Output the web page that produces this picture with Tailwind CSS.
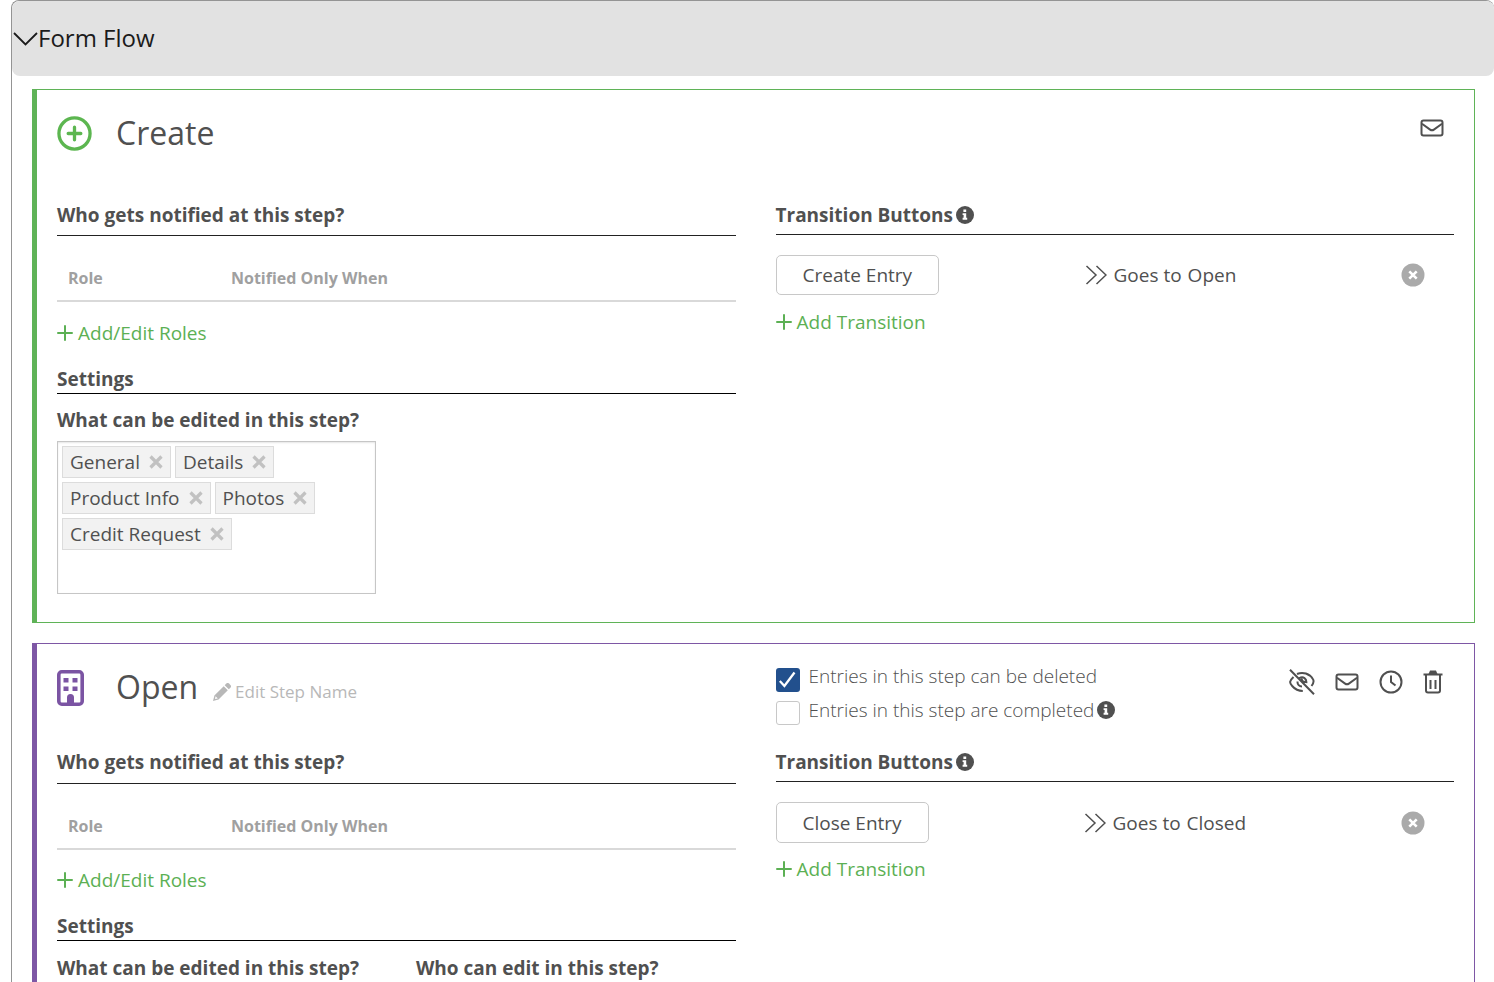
<!DOCTYPE html>
<html lang="en">
<head>
<meta charset="utf-8">
<meta name="viewport" content="width=device-width, initial-scale=1">
<title>Form Flow</title>
<script src="https://cdn.jsdelivr.net/npm/@tailwindcss/browser@4"></script>
</head>
<body class="bg-white font-['Open_Sans',sans-serif] text-[19px] leading-7 text-[#505050]">
<svg class="hidden" aria-hidden="true">
  <symbol id="info" viewBox="0 0 18 18"><circle cx="9" cy="9" r="9" fill="currentColor"/><path d="M7.4 3.4h2.800v2.500H7.4zM6.6 7.200h3.600v4.600h1v1.900H6.6v-1.900h1V9.1h-1z" fill="#fff"/></symbol>
  <symbol id="plus" viewBox="0 0 16 16"><path d="M8 1v14M1 8h14" fill="none" stroke="currentColor" stroke-width="2" stroke-linecap="round"/></symbol>
  <symbol id="mail" viewBox="0 0 24 18"><rect x="1.500" y="1.500" width="21" height="15" rx="2" fill="none" stroke="currentColor" stroke-width="2"/><path d="M2 4.800l8.100 5.800q1.900 1.300 3.800 0L22 4.800" fill="none" stroke="currentColor" stroke-width="2"/></symbol>
  <symbol id="goes" viewBox="0 0 22 20"><path d="M1.500 1L11 10l-9.500 9M11.500 1L21 10l-9.500 9" fill="none" stroke="currentColor" stroke-width="1.500"/></symbol>
  <symbol id="remove" viewBox="0 0 24 24"><circle cx="12" cy="12" r="11.500" fill="#aaa"/><path d="M8.300 8.300l7.400 7.400M15.700 8.300l-7.400 7.400" stroke="#fff" stroke-width="2.600"/></symbol>
  <symbol id="cross" viewBox="0 0 14 14"><path d="M1.500 1.500l11 11M12.500 1.500l-11 11" stroke="#c1c1c1" stroke-width="3.200"/></symbol>
</svg>
<div class="flex h-screen flex-col overflow-hidden pl-[11px]">
<section class="flex grow flex-col rounded-t-lg border-t border-l border-[#949494]">
  <button type="button" class="flex h-[75px] w-full shrink-0 items-center rounded-lg bg-[#e2e2e2] pb-[2px] text-2xl text-[#1b1b1b]">
    <svg class="h-4 w-[26px]" viewBox="0 0 26 16"><path d="M2 3l11.500 11.500L25 3" fill="none" stroke="currentColor" stroke-width="1.800"/></svg>
    Form Flow
  </button>

  <article class="mt-[13px] mr-[19px] ml-5 border border-l-[5px] border-[#5fb357] px-5 pb-7">
    <header class="flex h-[111px] pt-[22px]">
      <svg class="mt-1 size-[35px]" viewBox="0 0 36 36" fill="none" stroke="#5cb650"><circle cx="18" cy="18" r="16" stroke-width="3.400"/><path d="M18 11.500v13M11.500 18h13" stroke-width="3.400" stroke-linecap="round"/></svg>
      <h2 class="ml-6 text-[32px] leading-[42px]">Create</h2>
      <button type="button" aria-label="Notifications" class="mt-[7px] mr-[10px] ml-auto h-[18px] w-6"><svg class="h-[18px] w-6"><use href="#mail"/></svg></button>
    </header>
    <div class="grid grid-cols-2 gap-10">
      <div>
        <h3 class="border-b border-[#222] pb-[6px] font-bold">Who gets notified at this step?</h3>
        <table class="mt-[20px] w-full border-b-2 border-[#d9d9d9] text-left text-base text-[#a0a0a0]">
          <tr><th scope="col" class="h-[45px] w-[174px] pl-[11px]">Role</th><th scope="col">Notified Only When</th></tr>
        </table>
        <a href="#" class="mt-[17px] flex items-center gap-[5px] text-[#5cb054]"><svg class="size-4"><use href="#plus"/></svg>Add/Edit Roles</a>
        <h3 class="mt-[18px] border-b border-black font-bold">Settings</h3>
        <h4 class="mt-3 font-bold">What can be edited in this step?</h4>
        <ul class="mt-[7px] flex h-[153px] w-[319px] flex-wrap content-start gap-1 border border-[#c6c6c6] p-1 shadow-[inset_0_1px_2px_rgba(0,0,0,0.1)]">
          <li class="flex h-8 items-center gap-[9px] border border-[#dcdcdc] bg-[#f2f2f2] px-[7px]">General<button type="button" aria-label="Remove General"><svg class="size-[14px]"><use href="#cross"/></svg></button></li>
          <li class="flex h-8 items-center gap-[9px] border border-[#dcdcdc] bg-[#f2f2f2] px-[7px]">Details<button type="button" aria-label="Remove Details"><svg class="size-[14px]"><use href="#cross"/></svg></button></li>
          <li class="flex h-8 items-center gap-[9px] border border-[#dcdcdc] bg-[#f2f2f2] px-[7px]">Product Info<button type="button" aria-label="Remove Product Info"><svg class="size-[14px]"><use href="#cross"/></svg></button></li>
          <li class="flex h-8 items-center gap-[9px] border border-[#dcdcdc] bg-[#f2f2f2] px-[7px]">Photos<button type="button" aria-label="Remove Photos"><svg class="size-[14px]"><use href="#cross"/></svg></button></li>
          <li class="flex h-8 items-center gap-[9px] border border-[#dcdcdc] bg-[#f2f2f2] px-[7px]">Credit Request<button type="button" aria-label="Remove Credit Request"><svg class="size-[14px]"><use href="#cross"/></svg></button></li>
        </ul>
      </div>
      <div>
        <h3 class="flex items-center gap-[3px] border-b border-[#222] pb-[5px] font-bold">Transition Buttons<svg class="size-[18px]"><use href="#info"/></svg></h3>
        <div class="mt-5 flex items-center">
          <div class="w-[309px]"><button type="button" class="h-10 rounded-[5px] border border-[#c8c8c8] px-[26px]">Create Entry</button></div>
          <svg class="mr-[7px] h-5 w-[22px]"><use href="#goes"/></svg>
          <span>Goes to</span><span class="ml-[6px]">Open</span>
          <button type="button" aria-label="Remove transition" class="mr-[29px] ml-auto size-6"><svg class="size-6"><use href="#remove"/></svg></button>
        </div>
        <a href="#" class="mt-[13px] flex items-center gap-[5px] text-[#5cb054]"><svg class="size-4"><use href="#plus"/></svg>Add Transition</a>
      </div>
    </div>
  </article>

  <article class="mt-5 mr-[19px] ml-5 grow border border-b-0 border-l-[5px] border-[#7e57a5] px-5">
    <header class="grid h-[104px] grid-cols-2 gap-10 pt-[22px]">
      <div class="flex">
        <svg class="mt-1 h-9 w-[27px]" viewBox="0 0 27 36"><rect x="1.800" y="1.800" width="23.400" height="32.400" rx="3" fill="none" stroke="#7b54a3" stroke-width="3.600"/><path d="M6.500 8h5v4.600h-5zM15.500 8h5v4.600h-5zM6.500 16.500h5v4.600h-5zM15.500 16.500h5v4.600h-5zM10 34v-6.500a3.500 3.500 0 0 1 7 0V34z" fill="#7b54a3"/></svg>
        <h2 class="ml-8 text-[32px] leading-[42px]">Open</h2>
        <button type="button" class="mt-3 ml-[15px] flex h-7 items-center gap-1 text-[17px] text-[#b8b8b8]"><svg class="size-[18px]" viewBox="0 0 18 18" fill="currentColor"><path d="M10.700 3.200l4.100 4.100-9.300 9.300L0 18l1.400-5.500zM11.700 2.200L13.300.6a2 2 0 0 1 2.800 0l1.300 1.300a2 2 0 0 1 0 2.800l-1.600 1.600z"/><path d="M2.600 13.200l2.200 2.200-2.800.7z" fill="#fff"/></svg>Edit Step Name</button>
      </div>
      <div class="flex justify-between">
        <div class="-mt-1 flex flex-col gap-[6px] font-light">
          <label class="flex h-7 gap-[9px]"><input type="checkbox" checked class="peer sr-only"><span class="mt-[6px] flex size-6 shrink-0 items-center justify-center rounded-[3px] bg-[#22508d]"><svg class="size-[18px]" viewBox="0 0 18 18"><path d="M.8 10l4.600 5L15.500 1.500" fill="none" stroke="#fff" stroke-width="2.300"/></svg></span>Entries in this step can be deleted</label>
          <div class="flex h-7 items-center gap-[3px]"><label class="flex h-7 gap-[9px]"><input type="checkbox" class="mt-[5px] size-6 shrink-0 appearance-none rounded-[3px] border border-[#c8c8c8] bg-white">Entries in this step are completed</label><svg class="size-[18px]"><use href="#info"/></svg></div>
        </div>
        <div class="mt-[3px] mr-[11px] flex h-[26px] items-center">
          <button type="button" aria-label="Hide step" class="mr-5 h-[26px] w-[26px]"><svg class="size-[26px]" viewBox="0 0 26 26" fill="none" stroke="currentColor" stroke-width="2"><path d="M4.500 8C.2 12 .2 13.800 3.200 17c2.700 3.200 6.300 5 10.600 5M8 5c6-2.600 12.500-.4 16 5.300 1.300 2 .9 3.500-1.500 6.700M10.300 9.200c3.800-2.300 7.700.3 7 5M13 9.500c-.6 2 .6 3.500 3.500 3.500M8.500 12.500c-.2 3 1.800 5 4.500 5M1 .8l24 24.400"/></svg></button>
          <button type="button" aria-label="Notifications" class="mr-5 h-[18px] w-6"><svg class="h-[18px] w-6"><use href="#mail"/></svg></button>
          <button type="button" aria-label="Timing" class="mr-5 size-6"><svg class="size-6" viewBox="0 0 24 24" fill="none" stroke="currentColor" stroke-width="2"><circle cx="12" cy="12" r="10.500"/><path d="M12 5.500V12l4.500 3.500"/></svg></button>
          <button type="button" aria-label="Delete step" class="h-6 w-5"><svg class="h-6 w-5" viewBox="0 0 20 24" fill="none" stroke="currentColor" stroke-width="2"><path d="M.5 4.500h19M3 5v15.500a2 2 0 0 0 2 2h10a2 2 0 0 0 2-2V5M7.500 10v9M12.500 10v9"/><path d="M5.500 4L7 .5h6L14.500 4z" fill="currentColor" stroke="none"/></svg></button>
        </div>
      </div>
    </header>
    <div class="grid grid-cols-2 gap-10">
      <div>
        <h3 class="border-b border-[#222] pb-[7px] font-bold">Who gets notified at this step?</h3>
        <table class="mt-[20px] w-full border-b-2 border-[#d9d9d9] text-left text-base text-[#a0a0a0]">
          <tr><th scope="col" class="h-[45px] w-[174px] pb-px pl-[11px]">Role</th><th scope="col" class="pb-px">Notified Only When</th></tr>
        </table>
        <a href="#" class="mt-4 flex items-center gap-[5px] text-[#5cb054]"><svg class="size-4"><use href="#plus"/></svg>Add/Edit Roles</a>
        <h3 class="mt-[18px] border-b border-black font-bold">Settings</h3>
        <div class="mt-[13px] grid grid-cols-[319px_1fr] gap-10 font-bold"><h4>What can be edited in this step?</h4><h4>Who can edit in this step?</h4></div>
      </div>
      <div>
        <h3 class="flex items-center gap-[3px] border-b border-[#222] pb-[5px] font-bold">Transition Buttons<svg class="size-[18px]"><use href="#info"/></svg></h3>
        <div class="mt-5 flex items-center">
          <div class="w-[308px]"><button type="button" class="h-[41px] rounded-[5px] border border-[#c8c8c8] px-[26px]">Close Entry</button></div>
          <svg class="mr-[7px] h-5 w-[22px]"><use href="#goes"/></svg>
          <span>Goes to</span><span class="ml-[6px]">Closed</span>
          <button type="button" aria-label="Remove transition" class="mr-[29px] ml-auto size-6"><svg class="size-6"><use href="#remove"/></svg></button>
        </div>
        <a href="#" class="mt-3 flex items-center gap-[5px] text-[#5cb054]"><svg class="size-4"><use href="#plus"/></svg>Add Transition</a>
      </div>
    </div>
  </article>
</section>
</div>
</body>
</html>
